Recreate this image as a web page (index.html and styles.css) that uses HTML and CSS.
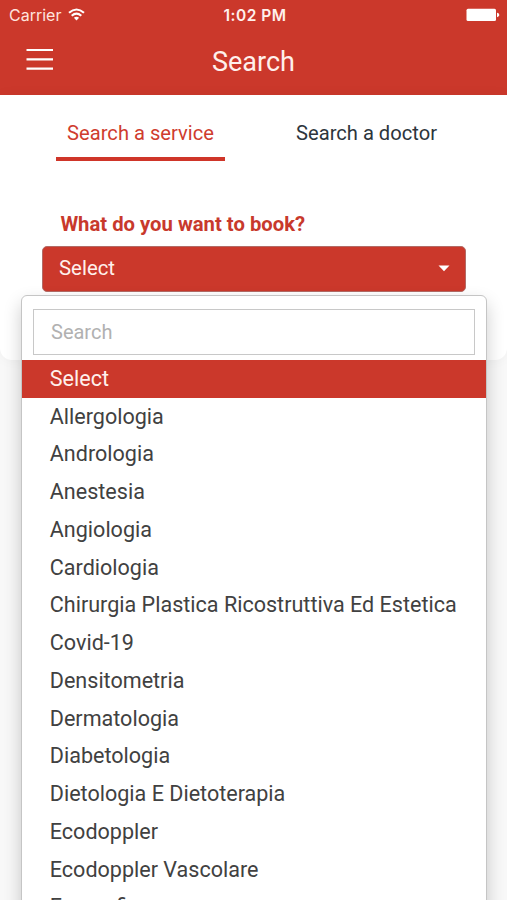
FILE: index.html
```html
<!DOCTYPE html>
<html lang="en">
<head>
<meta charset="utf-8">
<meta name="viewport" content="width=device-width, initial-scale=1">
<title>Search</title>
<link rel="stylesheet" href="styles.css">
</head>
<body>
<header class="header">
  <div class="status">
    <span class="carrier">Carrier
      <svg class="wifi" width="17" height="13" viewBox="0 0 17 13" fill="none" stroke="#fff" stroke-width="2.1"><path d="M1 4.8Q8.5-1.8 16 4.8M3.7 7.7Q8.5 3.5 13.3 7.7"/><path d="M5.9 9.8Q8.5 7.6 11.1 9.8L8.5 12.4Z" fill="#fff" stroke="none"/></svg>
    </span>
    <span class="time">1:02 PM</span>
    <svg class="battery" width="34" height="14" viewBox="0 0 34 14" fill="#fff"><rect x="0.5" y="0.8" width="29.5" height="12.2" rx="1.5"/><path d="M31 4.8c3 .4 3 4 0 4.4z"/></svg>
  </div>
  <div class="nav">
    <svg class="menu" width="28" height="24" viewBox="0 0 28 24" stroke="#fff" stroke-width="2.2"><path d="M.5 2h26.5M.5 11.3h26.5M.5 20.6h26.5"/></svg>
    <h1 class="title">Search</h1>
  </div>
</header>
<main class="panel">
  <nav class="tabs">
    <a class="tab active"><span class="tab-text service">Search a service</span></a>
    <a class="tab"><span class="tab-text doctor">Search a doctor</span></a>
  </nav>
  <label class="question">What do you want to book?</label>
  <div class="select">
    <span>Select</span>
    <svg width="12" height="7" viewBox="0 0 12 7"><path d="M.5.5h11L6 6.3z" fill="#fff"/></svg>
    <div class="dropdown">
      <input class="filter" type="text" placeholder="Search">
      <ul class="options">
        <li class="selected">Select</li>
        <li>Allergologia</li>
        <li>Andrologia</li>
        <li>Anestesia</li>
        <li>Angiologia</li>
        <li>Cardiologia</li>
        <li>Chirurgia Plastica Ricostruttiva Ed Estetica</li>
        <li>Covid-19</li>
        <li>Densitometria</li>
        <li>Dermatologia</li>
        <li>Diabetologia</li>
        <li>Dietologia E Dietoterapia</li>
        <li>Ecodoppler</li>
        <li>Ecodoppler Vascolare</li>
        <li>Ecografia</li>
      </ul>
    </div>
  </div>
</main>
</body>
</html>
```
FILE: styles.css
```css
* { box-sizing: border-box; }
html, body { height: 100%; }
body {
  margin: 0;
  overflow: hidden;
  background: #f8f8f8;
  color: #3d3d3d;
  font-family: Roboto, "Liberation Sans", sans-serif;
}
.header { height: 95px; background: #cb382b; color: #fff; }
.status {
  display: grid;
  grid-template-columns: 1fr auto 1fr;
  align-items: center;
  height: 30px;
  padding: 0 6px 0 9px;
  font-family: Inter, sans-serif;
  font-size: 16px;
}
.carrier { display: flex; align-items: center; gap: 7px; color: #ffe4de; }
.wifi { margin-top: -2px; }
.time { font-size: 15.5px; font-weight: 600; letter-spacing: 0.5px; color: #fff0ec; }
.battery { justify-self: end; margin-right: 1px; }
.nav { display: grid; grid-template-columns: 28px 1fr 28px; align-items: center; height: 60px; padding: 0 26px; }
.title { margin: 4px 0 0; text-align: center; font-size: 27px; line-height: 32px; font-weight: 400; color: #fff0ec; }
.panel { height: 265px; background: #fff; border-radius: 0 0 12px 12px; box-shadow: 0 0 14px rgba(0, 0, 0, 0.04); }
.tabs { display: grid; grid-template-columns: 169px 169px; justify-content: center; gap: 57px; height: 66px; }
.tab { display: flex; justify-content: center; padding-top: 26px; color: #2d353c; font-size: 20.15px; line-height: 25px; }
.tab.active { color: #cf3c2e; border-bottom: 4px solid #cf3529; }
.tab-text { white-space: nowrap; }
.question { display: block; margin: 49px 0 0 60.4px; font-size: 20.25px; line-height: 28px; font-weight: 700; color: #c8392c; }
.select {
  position: relative;
  display: flex;
  align-items: center;
  justify-content: space-between;
  width: 424px;
  height: 46px;
  margin: 8px 0 0 42px;
  padding: 0 15px 2px 16px;
  border: 1px solid #b26b66;
  border-radius: 5px;
  background: #cb382b;
  color: #fff0ec;
  font-size: 20.4px;
}
.dropdown {
  position: absolute;
  top: 48px;
  left: -22px;
  width: 466px;
  height: 660px;
  padding-top: 13px;
  border: 1px solid #c5c5c5;
  border-radius: 6px;
  background: #fff;
  box-shadow: 0 8px 18px rgba(0, 0, 0, 0.2);
}
.filter {
  display: block;
  width: 442px;
  height: 46px;
  margin: 0 0 5px 11px;
  padding: 0 17px;
  border: 1px solid #c8c8c8;
  background: #fff;
  font: 20px Roboto, sans-serif;
}
.filter::placeholder { color: #b1b1b1; opacity: 1; }
.options { margin: 0; padding: 0; list-style: none; }
.options li { height: 37.74px; padding-left: 27.8px; color: #414141; font-size: 21.55px; line-height: 37.7px; white-space: nowrap; }
.options .selected { background: #cb382b; color: #fff0ec; }
```
